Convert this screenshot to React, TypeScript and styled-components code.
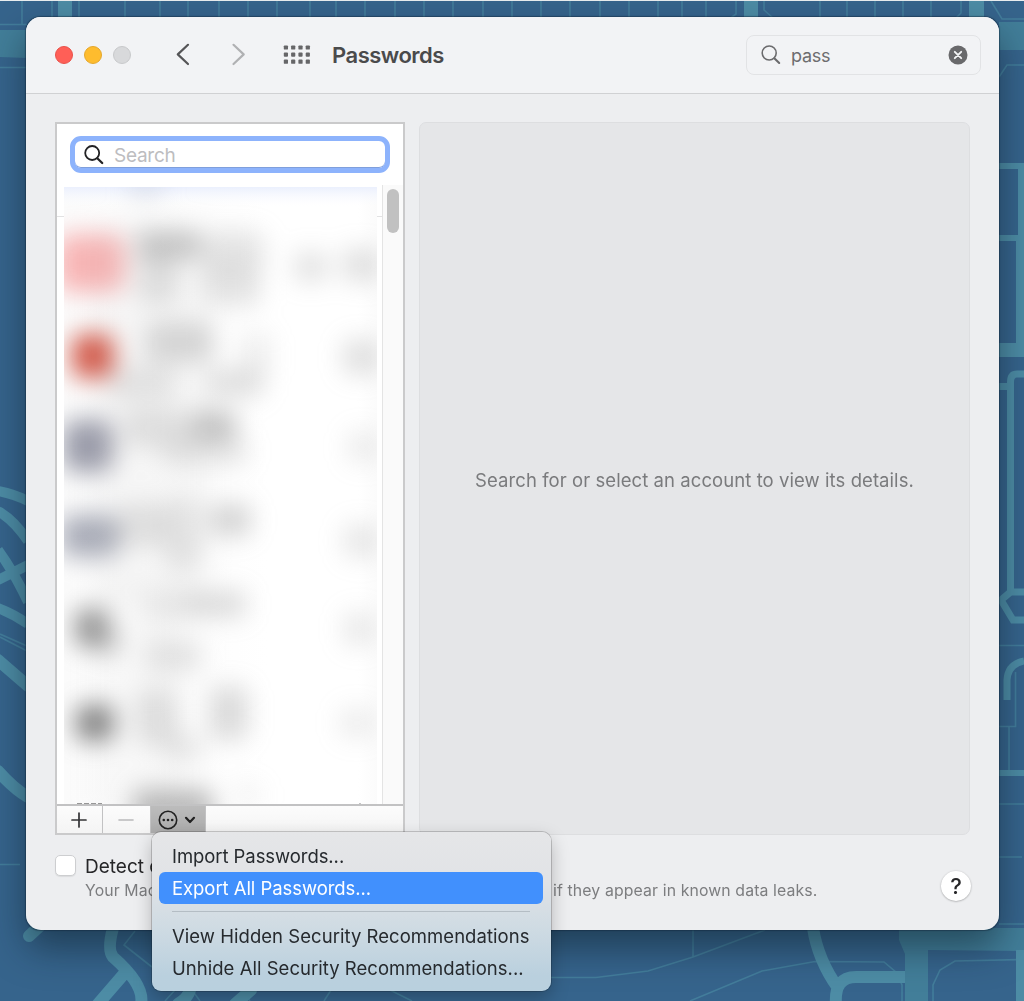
import React from "react";
import styled, { createGlobalStyle } from "styled-components";

const Global = createGlobalStyle`
  * { box-sizing: border-box; }
  body { margin: 0; font-family: Inter, "Liberation Sans", sans-serif; color: #262628; }
`;

const Desktop = styled.div`
  position: relative;
  display: grid;
  width: 1024px;
  height: 1001px;
  overflow: hidden;
  background: #36648c;
  & > * { grid-area: 1 / 1; }
`;

const Window = styled.main`
  display: flex;
  flex-direction: column;
  width: 973px;
  height: 912.5px;
  margin: 17px 0 0 26px;
  border-radius: 15px;
  background: #edeef0;
  overflow: hidden;
`;

const WindowShadow = styled.div`
  width: 973px;
  height: 912.5px;
  margin: 17px 0 0 26px;
  border-radius: 15px;
  box-shadow: 0 0 1px 0.5px rgba(15, 35, 55, 0.45), 0 18px 36px rgba(10, 25, 35, 0.5);
`;

const Toolbar = styled.header`
  display: flex;
  align-items: center;
  flex: none;
  height: 77px;
  padding: 0 18px 0 29px;
  background: #f2f3f5;
  border-bottom: 1px solid #d0d1d3;
`;

const Lights = styled.div`
  display: flex;
  gap: 11px;
  margin-right: 44px;
`;

const Light = styled.span<{ $fill: string; $edge: string }>`
  width: 18px;
  height: 18px;
  border-radius: 50%;
  background: ${(p) => p.$fill};
  border: 1px solid ${(p) => p.$edge};
`;

const Title = styled.h1`
  flex: 1;
  margin: 0 0 0 21px;
  font-size: 22px;
  font-weight: 600;
  letter-spacing: -0.5px;
  color: #4a4a4b;
`;

const ToolbarSearch = styled.div`
  display: flex;
  align-items: center;
  width: 235px;
  height: 40px;
  padding: 0 12px 0 14px;
  border: 1px solid #e2e3e5;
  border-radius: 8px;
  font-size: 18px;
  letter-spacing: -0.25px;
  color: #6d6d6f;
  span { flex: 1; margin-left: 10px; padding-top: 1px; }
`;

const Panels = styled.div`
  display: flex;
  flex: none;
  gap: 14px;
  height: 713px;
  margin: 28px 29px 0 29px;
`;

const Accounts = styled.section`
  display: flex;
  flex-direction: column;
  flex: none;
  width: 350px;
  border: 2px solid #cacacb;
  background: #fff;
`;

const SearchField = styled.div`
  display: flex;
  align-items: center;
  flex: none;
  width: 320px;
  height: 37px;
  margin: 12px 0 0 13px;
  padding-left: 9px;
  border: 5px solid #8db3fc;
  border-radius: 11px;
  background: #fff;
  box-shadow: inset 0 -1px 0 #7f9fdc;
  font-size: 19px;
  letter-spacing: -0.25px;
  color: #bdbdbf;
  span { margin-left: 10px; padding-top: 1px; }
`;

const ListArea = styled.div`
  display: flex;
  flex: 1;
  min-height: 0;
  margin-top: 12px;
`;

const ListView = styled.div`
  flex: 1;
  padding: 2px 5px 0 7px;
  background: linear-gradient(#e2e2e3, #e2e2e3) 0 31px / 100% 1px no-repeat;
  overflow: hidden;
  svg { display: block; }
`;

const ScrollTrack = styled.div`
  width: 21px;
  padding: 4px 0 0 4px;
  border-left: 1px solid #e4e4e4;
  background: #fafafa;
`;

const Thumb = styled.div`
  width: 12px;
  height: 44px;
  border-radius: 6px;
  background: #c1c1c1;
`;

const ListActions = styled.div`
  display: flex;
  flex: none;
  height: 29px;
  border-top: 2px solid #c2c2c3;
  background: linear-gradient(#fcfcfc, #f4f4f4);
`;

const Action = styled.button<{ $width: number; $pressed?: boolean }>`
  display: flex;
  align-items: center;
  justify-content: center;
  gap: 6px;
  width: ${(p) => p.$width}px;
  height: 27px;
  padding: 0 1px 0 0;
  border: 0;
  border-right: 1px solid #c2c2c3;
  background: ${(p) => (p.$pressed ? "linear-gradient(#bcbcbc, #acacac)" : "transparent")};
`;

const Details = styled.section`
  display: flex;
  align-items: center;
  justify-content: center;
  flex: 1;
  border: 1px solid #dddee0;
  border-radius: 7px;
  background: #e5e6e8;
  font-size: 18.5px;
  letter-spacing: 0.07px;
  color: #7a7b7d;
  white-space: nowrap;
  padding-top: 3px;
`;

const Footer = styled.footer`
  display: flex;
  align-items: flex-start;
  margin: 20px 28px 0 29px;
`;

const Checkbox = styled.span`
  width: 21px;
  height: 21px;
  margin-right: 9px;
  border: 1px solid #cdced0;
  border-radius: 5px;
  background: #fff;
  box-shadow: 0 1px 1px rgba(0, 0, 0, 0.08);
`;

const FooterText = styled.div`
  flex: 1;
  white-space: nowrap;
`;

const FooterLabel = styled.div`
  font-size: 19px;
  line-height: 24px;
`;

const FooterNote = styled.div`
  display: flex;
  justify-content: space-between;
  width: 732.5px;
  font-size: 15.8px;
  line-height: 24px;
  letter-spacing: 0.13px;
  color: #7c7d7f;
`;

const Help = styled.button`
  width: 30px;
  height: 30px;
  margin-top: 16px;
  padding: 0;
  border: 0;
  border-radius: 50%;
  background: #fff;
  box-shadow: 0 0.5px 2px rgba(0, 0, 0, 0.35);
  font: 500 22px/30px Inter, sans-serif;
  color: #262628;
`;

const Menu = styled.ul`
  position: absolute;
  left: 151.5px;
  top: 832px;
  width: 399px;
  height: 159px;
  margin: 0;
  padding: 7.5px;
  list-style: none;
  border-radius: 9px;
  background: linear-gradient(#e5e6e8 0%, #e1e3e6 30%, #cfdbe3 60%, #bad0de 90%, #b9d0de 100%);
  box-shadow: 0 0 0 1px rgba(0, 0, 0, 0.18), 0 7px 18px rgba(0, 0, 0, 0.25);
`;

const MenuItem = styled.li<{ $active?: boolean; $spacing: number }>`
  height: 32px;
  padding-left: 13px;
  border-radius: 6px;
  background: ${(p) => (p.$active ? "#4190fd" : "transparent")};
  color: ${(p) => (p.$active ? "#fff" : "#262a2e")};
  font-size: 18.5px;
  line-height: 32px;
  letter-spacing: ${(p) => p.$spacing}px;
  white-space: nowrap;
`;

const MenuDivider = styled.li`
  height: 1.5px;
  margin: 7px 13px 7.5px;
  background: #b4bdc4;
`;

function Wallpaper() {
  const topLines = [22, 52, 79, 125, 160, 188, 219, 248, 277, 310, 336, 365, 395, 424, 453, 483, 512, 541, 570, 600, 629, 658, 682, 706, 820, 847, 875, 903, 931];
  return (
    <svg width="1024" height="1001" viewBox="0 0 1024 1001" fill="none">
      <g stroke="#437d9b" strokeWidth="1.6">
        {topLines.map((x) => (
          <path key={x} d={`M${x} 1V${x < 60 ? 24 : 20}`} />
        ))}
        <path d="M0 24.500H27M0 67.500H27M736 1V14L728 20M764 1V10L773 18M961 1V13L954 20M991 1L1002 19H1024M999 77L1007 65H1024" />
        <path d="M0 634L27 646M0 637L27 651M0 864.500H20" />
        <path d="M999 645.500H1024M1015.500 672V726.500H999M1009 727V771M999 804H1024M999 857H1022M999 924H1024" />
        <path d="M135 931L124 945L152 967M165 1001L175 990M192 990L200 1001M242 990L250 1001M324 1001L331 990M390 990L412 1001M551 977.500H596L648 971L693 957L765 930M693 930V957M690 1001L762 971L815 961.500L884 962L897 973L902 985V1001M933 1001V985L940 970L955 961L1024 959.500" />
      </g>
      <g fill="#427e99">
        <path d="M0 30H27V58L0 57ZM999 22H1024V50H999ZM899 928H1024V951L928 950V1001H905V954L899 940Z" />
      </g>
      <g fill="#4d8ca5">
        <path d="M58 1H72V20H58ZM744 1H758V20H744ZM969 1H984V20H969ZM1016 950H1024V1001H1016Z" />
        <path d="M999 163H1024V343H1016V241H999V235H1018V169H999ZM999 343H1024V357H999ZM999 383H1008V390H999ZM999 770H1024V776H999Z" />
      </g>
      <g stroke="#4d8ca5">
        <path strokeWidth="7" d="M1024 374H1017Q1010.500 374 1010.500 382V592L1001 600L1013 620H1024M1010 592H1024" />
        <path strokeWidth="7" d="M1007 700V680Q1008 664 1024 661" />
        <path strokeWidth="10" d="M-2 491Q14 494 28 501M-2 511Q14 520 28 541M-2 550Q14 572 28 602M-2 580L28 565M-2 608Q14 614 28 624" />
        <path strokeWidth="12" d="M-2 660L28 686M-2 771Q14 789 28 797M29 936L42 924M113 928Q107 950 113 957Q145 985 141 1004M123 975L98 1004M178 1004Q188 998 190 990M235 1004L251 990" strokeLinecap="round" />
        <path strokeWidth="12" d="M813 928Q818 960 838 988M836 1004Q834 977 856 977H905" />
      </g>
      <path d="M0 .5H1024" stroke="#e9edef" />
    </svg>
  );
}

type Blob = [x: number, y: number, rx: number, ry: number, color: string, opacity: number];

const blobs: Blob[] = [
  [91, 263, 34, 29, "#f79a9a", 0.72],
  [93, 356, 21, 22, "#c9301c", 0.8],
  [88, 446, 25, 26, "#74778b", 0.72],
  [90, 536, 29, 21, "#7c8093", 0.64],
  [92, 628, 17, 19, "#606060", 0.66],
  [108, 643, 13, 11, "#888", 0.35],
  [95, 723, 19, 18, "#3f3f3f", 0.64],
  [168, 245, 31, 14, "#777", 0.42],
  [158, 280, 20, 24, "#888", 0.24],
  [232, 252, 32, 21, "#999", 0.25],
  [232, 286, 29, 20, "#999", 0.26],
  [180, 342, 34, 20, "#777", 0.27],
  [142, 383, 33, 16, "#888", 0.2],
  [235, 383, 28, 14, "#888", 0.26],
  [256, 355, 14, 22, "#aaa", 0.2],
  [155, 428, 31, 19, "#888", 0.22],
  [213, 426, 23, 15, "#666", 0.38],
  [205, 451, 42, 14, "#888", 0.2],
  [145, 525, 27, 21, "#888", 0.22],
  [184, 528, 18, 30, "#999", 0.2],
  [231, 520, 20, 16, "#777", 0.31],
  [182, 560, 16, 16, "#aaa", 0.18],
  [166, 607, 21, 14, "#aaa", 0.22],
  [215, 604, 31, 13, "#888", 0.29],
  [173, 656, 27, 16, "#999", 0.25],
  [157, 717, 21, 28, "#888", 0.23],
  [229, 713, 19, 27, "#888", 0.29],
  [183, 748, 19, 14, "#999", 0.22],
  [173, 808, 40, 19, "#777", 0.5],
  [248, 795, 13, 11, "#aaa", 0.14],
  [311, 267, 17, 15, "#888", 0.24],
  [361, 265, 18, 17, "#888", 0.26],
  [361, 357, 18, 18, "#888", 0.26],
  [363, 447, 15, 16, "#999", 0.19],
  [361, 541, 17, 17, "#999", 0.24],
  [359, 629, 15, 17, "#999", 0.22],
  [357, 723, 17, 15, "#999", 0.18],
  [150, 410, 60, 190, "#aaa", 0.07],
  [135, 700, 45, 120, "#aaa", 0.05],
];

function BlurredAccounts() {
  return (
    <svg width="313" height="618" viewBox="64 187 313 618">
      <defs>
        <filter id="soft" x="0" y="130" width="450" height="740" filterUnits="userSpaceOnUse" colorInterpolationFilters="sRGB">
          <feGaussianBlur stdDeviation="12" />
        </filter>
        <linearGradient id="tint" x1="0" y1="0" x2="0" y2="1">
          <stop offset="0" stopColor="#ebf0fd" />
          <stop offset="1" stopColor="#fbfcff" stopOpacity="0" />
        </linearGradient>
        <linearGradient id="haze">
          <stop offset="0" stopColor="#fbfbfb" />
          <stop offset=".45" stopColor="#fdfdfd" />
          <stop offset=".65" stopColor="#fff" />
          <stop offset=".94" stopColor="#fff" />
          <stop offset="1" stopColor="#fbfbfb" />
        </linearGradient>
      </defs>
      <rect x="64" y="187" width="313" height="618" fill="url(#haze)" />
      <rect x="64" y="187" width="313" height="20" fill="url(#tint)" />
      <g filter="url(#soft)">
        {blobs.map(([x, y, rx, ry, color, opacity]) => (
          <rect key={`${x}-${y}`} x={x - rx} y={y - ry} width={rx * 2} height={ry * 2} rx={Math.min(rx, ry) * 0.5} fill={color} opacity={opacity} />
        ))}
        <ellipse cx="146" cy="188" rx="18" ry="10" fill="#9da5ba" opacity=".3" />
      </g>
      <path d="M77 804H102" stroke="#777" strokeWidth="1.500" strokeDasharray="5 2" />
      <path d="M359 804H361" stroke="#888" />
    </svg>
  );
}

function Magnifier({ color, weight }: { color: string; weight: number }) {
  return (
    <svg width="20" height="20" viewBox="0 0 20 20" fill="none" stroke={color} strokeWidth={weight} strokeLinecap="round">
      <circle cx="8.200" cy="8" r="7" />
      <path d="M13.300 13.200L18.200 18" strokeWidth={weight + 0.5} />
    </svg>
  );
}

export default function App() {
  return (
    <Desktop>
      <Global />
      <Wallpaper />
      <WindowShadow />
      <Window>
        <Toolbar>
          <Lights>
            <Light $fill="#ff5f57" $edge="#e9514a" />
            <Light $fill="#febc2e" $edge="#e5a72c" />
            <Light $fill="#d8d9db" $edge="#c8c9cb" />
          </Lights>
          <svg width="136" height="24" viewBox="0 0 136 24" fill="none">
            <path d="M13 1.800L2.800 11.400L13 21" stroke="#555557" strokeWidth="2.200" strokeLinecap="round" strokeLinejoin="round" />
            <path d="M58.500 1.800L68.700 11.400L58.500 21" stroke="#b0b1b3" strokeWidth="2.200" strokeLinecap="round" strokeLinejoin="round" />
            <g fill="#666668">
              {[2.4, 9.5, 16.6].map((y) =>
                [108.8, 116.1, 123.4, 130.7].map((x) => <rect key={`${x}-${y}`} x={x} y={y} width="4.200" height="4.200" rx="0.900" />)
              )}
            </g>
          </svg>
          <Title>Passwords</Title>
          <ToolbarSearch>
            <Magnifier color="#6b6b6d" weight={1.6} />
            <span>pass</span>
            <svg width="20" height="20" viewBox="0 0 20 20">
              <circle cx="10" cy="10" r="9.500" fill="#69696b" />
              <path d="M6.800 6.800L13.200 13.200M13.200 6.800L6.800 13.200" stroke="#f4f5f6" strokeWidth="1.900" strokeLinecap="round" />
            </svg>
          </ToolbarSearch>
        </Toolbar>
        <Panels>
          <Accounts>
            <SearchField>
              <Magnifier color="#222224" weight={1.8} />
              <span>Search</span>
            </SearchField>
            <ListArea>
              <ListView>
                <BlurredAccounts />
              </ListView>
              <ScrollTrack>
                <Thumb />
              </ScrollTrack>
            </ListArea>
            <ListActions>
              <Action $width={46} aria-label="Add">
                <svg width="16" height="16" viewBox="0 0 16 16" stroke="#333335" strokeWidth="1.700" strokeLinecap="round">
                  <path d="M8 1V15M1 8H15" />
                </svg>
              </Action>
              <Action $width={48} aria-label="Remove">
                <svg width="16" height="16" viewBox="0 0 16 16" stroke="#b9b9ba" strokeWidth="1.600" strokeLinecap="round">
                  <path d="M1 8H15" />
                </svg>
              </Action>
              <Action $width={54.5} $pressed aria-label="More">
                <svg width="20" height="20" viewBox="0 0 20 20" fill="#222">
                  <circle cx="10" cy="10" r="8.700" fill="none" stroke="#222" strokeWidth="1.600" />
                  <circle cx="5.800" cy="10" r="1.300" />
                  <circle cx="10" cy="10" r="1.300" />
                  <circle cx="14.200" cy="10" r="1.300" />
                </svg>
                <svg width="12" height="8" viewBox="0 0 12 8" fill="none" stroke="#222" strokeWidth="2.200" strokeLinecap="round" strokeLinejoin="round">
                  <path d="M2 1.800L6 6L10 1.800" />
                </svg>
              </Action>
            </ListActions>
          </Accounts>
          <Details>Search for or select an account to view its details.</Details>
        </Panels>
        <Footer>
          <Checkbox />
          <FooterText>
            <FooterLabel>Detect c</FooterLabel>
            <FooterNote>
              <span>Your Mac</span>
              <span>if they appear in known data leaks.</span>
            </FooterNote>
          </FooterText>
          <Help>?</Help>
        </Footer>
      </Window>
      <Menu>
        <MenuItem $spacing={-0.07}>Import Passwords...</MenuItem>
        <MenuItem $active $spacing={-0.06}>Export All Passwords...</MenuItem>
        <MenuDivider />
        <MenuItem $spacing={0.04}>View Hidden Security Recommendations</MenuItem>
        <MenuItem $spacing={0.03}>Unhide All Security Recommendations...</MenuItem>
      </Menu>
    </Desktop>
  );
}
